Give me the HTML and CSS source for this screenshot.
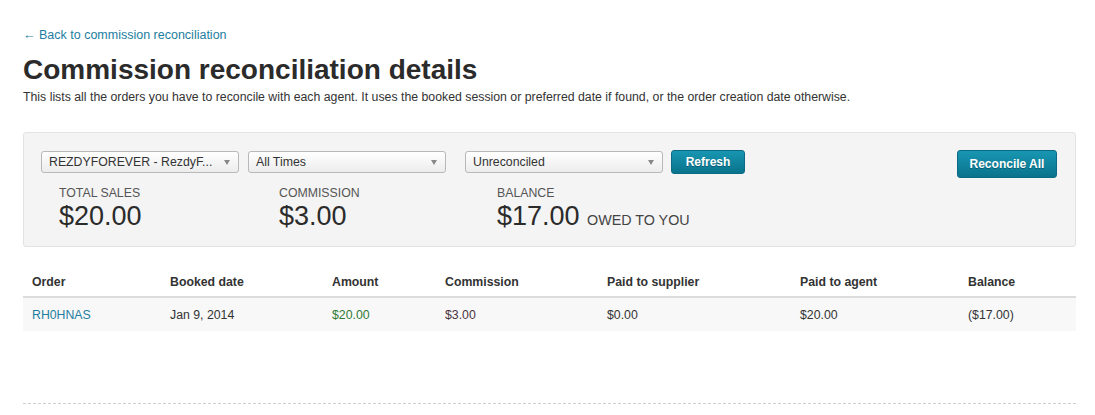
FILE: index.html
```html
<!doctype html>
<html>
<head>
	<meta charset="utf-8" />
	<title>Commission reconciliation details</title>
	<link rel="stylesheet" href="styles.css">
</head>
<body>
<div class="page">
	<a class="back" href="#">&larr; Back to commission reconciliation</a>
	<h1>Commission reconciliation details</h1>
	<p class="lead">This lists all the orders you have to reconcile with each agent. It uses the booked session or preferred date if found, or the order creation date otherwise.</p>

	<div class="panel">
		<div class="filters">
			<div class="select s1"><span>REZDYFOREVER - RezdyF...</span><i class="caret"></i></div>
			<div class="select s2"><span>All Times</span><i class="caret"></i></div>
			<div class="select s3"><span>Unreconciled</span><i class="caret"></i></div>
			<button class="btn refresh">Refresh</button>
			<button class="btn reconcile">Reconcile All</button>
		</div>
		<div class="stats">
			<div class="stat st1">
				<div class="label">TOTAL SALES</div>
				<div class="value">$20.00</div>
			</div>
			<div class="stat st2">
				<div class="label">COMMISSION</div>
				<div class="value">$3.00</div>
			</div>
			<div class="stat st3">
				<div class="label">BALANCE</div>
				<div class="value">$17.00 <small>OWED TO YOU</small></div>
			</div>
		</div>
	</div>

	<table class="orders">
		<colgroup>
			<col style="width:138px">
			<col style="width:162px">
			<col style="width:113px">
			<col style="width:162px">
			<col style="width:193px">
			<col style="width:168px">
			<col>
		</colgroup>
		<thead>
			<tr>
				<th>Order</th>
				<th>Booked date</th>
				<th>Amount</th>
				<th>Commission</th>
				<th>Paid to supplier</th>
				<th>Paid to agent</th>
				<th>Balance</th>
			</tr>
		</thead>
		<tbody>
			<tr>
				<td><a href="#">RH0HNAS</a></td>
				<td>Jan 9, 2014</td>
				<td class="green">$20.00</td>
				<td class="red">$3.00</td>
				<td>$0.00</td>
				<td>$20.00</td>
				<td>($17.00)</td>
			</tr>
		</tbody>
	</table>

	<div class="dashed"></div>
</div>
</body>
</html>
```
FILE: styles.css
```css
body{margin:0;padding:0;font-family:"Liberation Sans",Arial,sans-serif;color:#333;background:#fff;}
.page{width:1053px;margin:0 0 0 23px;padding-top:28px;}
.back{display:block;font-size:12.5px;line-height:14px;color:#1d7ea0;text-decoration:none;}
h1{margin:12px 0 0;font-size:28px;line-height:32px;font-weight:bold;color:#2b2b2b;}
.lead{margin:4px 0 0;font-size:12.3px;line-height:14px;color:#333;}

.panel{margin-top:28px;height:113px;background:#f4f4f4;border:1px solid #e3e3e3;border-radius:3px;}
.filters{display:flex;align-items:flex-start;padding:18px 0 0 17px;}
.select{position:relative;box-sizing:border-box;height:22px;border:1px solid #b8b8b8;border-radius:3px;
	background:linear-gradient(#ffffff,#ececec);font-size:12.3px;line-height:20px;padding-left:7px;color:#333;}
.s1{width:198px;}
.s2{width:198px;margin-left:9px;}
.s3{width:198px;margin-left:19px;}
.caret{position:absolute;right:8px;top:8px;width:0;height:0;border-left:3px solid transparent;border-right:3px solid transparent;border-top:5px solid #888;}
.btn{box-sizing:border-box;border:1px solid #0b6a84;border-radius:3px;background:linear-gradient(#1896b2,#0a738c);
	color:#fff;font-family:"Liberation Sans",Arial,sans-serif;font-weight:bold;font-size:12px;text-shadow:0 1px 0 rgba(0,0,0,0.3);padding:0;}
.refresh{width:74px;height:24px;margin:-1px 0 0 8px;}
.reconcile{width:100px;height:28px;margin:-1px 18px 0 auto;}

.stats{display:flex;padding:8px 0 0 35px;}
.st1{width:220px;}
.st2{width:218px;}
.label{font-size:12.3px;line-height:14px;color:#555;}
.value{font-size:27px;line-height:30px;margin-top:1px;color:#2b2b2b;}
.value small{font-size:14.3px;color:#444;}

.orders{width:100%;margin-top:21px;border-collapse:collapse;table-layout:fixed;font-size:12.3px;}
.orders th{text-align:left;font-weight:bold;color:#333;padding:0 9px;height:28px;border-bottom:2px solid #dcdcdc;}
.orders td{padding:0 9px;height:33px;background:#f8f8f8;color:#333;}
.orders td a{color:#1d7ea0;text-decoration:none;}
.orders td.green{color:#2f7a35;}
.orders td.red{color:#4a3340;}
.dashed{margin-top:72px;border-top:1px dashed #cfcfcf;}
```
